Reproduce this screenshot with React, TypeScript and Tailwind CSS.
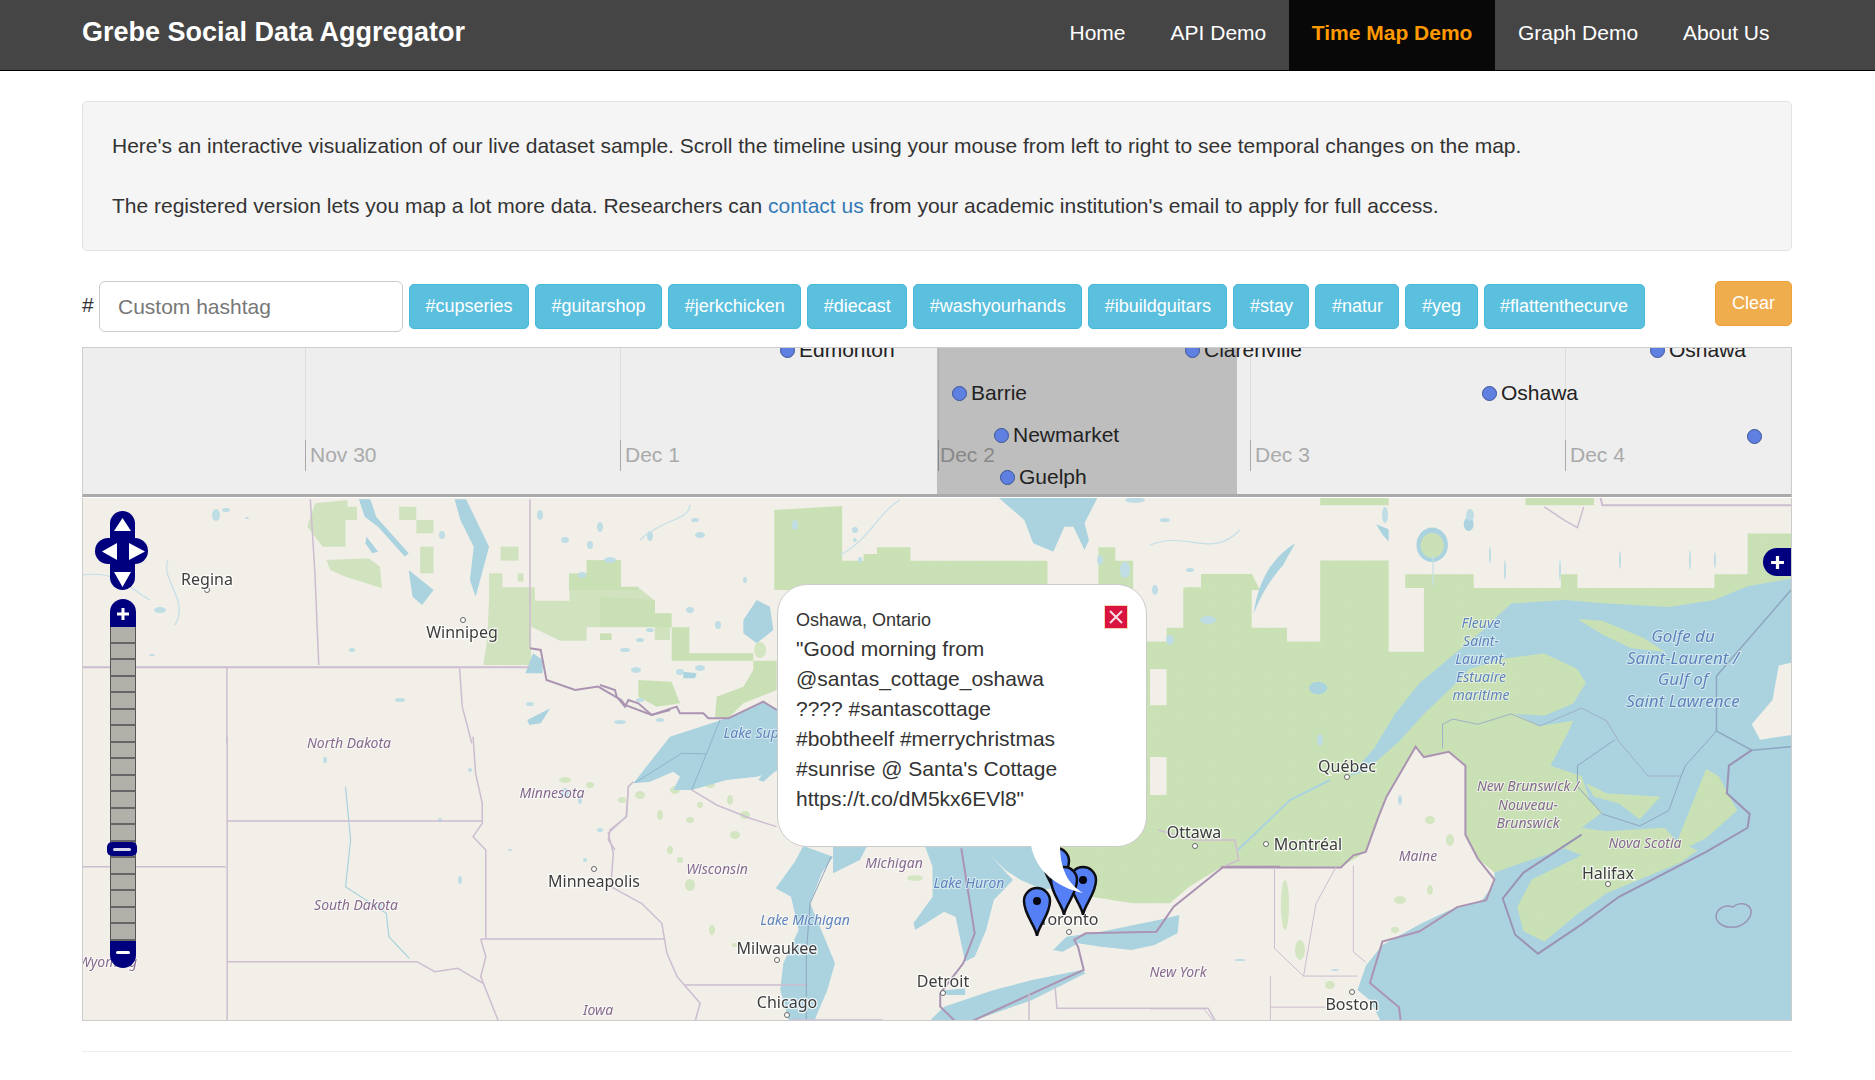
// Time map demo page: navbar, intro, hashtag buttons, timeline band and the map below it
const Z3 = 'translate(70 340) scale(.3827 .3333)'
const Z4 = 'translate(70 740) scale(.5102 .3333)'
const Z6 = 'translate(1150 500) scale(.415 .345)'
const Z9 = 'translate(560 490) scale(.4464 .3333)'
const Z10 = 'translate(680 830) scale(.3827 .3333)'
const Z12 = 'translate(600 590) scale(.3333 .3333)'

const navItems = [
  { label: 'Home' },
  { label: 'API Demo' },
  { label: 'Time Map Demo', active: true },
  { label: 'Graph Demo' },
  { label: 'About Us' },
]

const hashtags = [
  '#cupseries',
  '#guitarshop',
  '#jerkchicken',
  '#diecast',
  '#washyourhands',
  '#ibuildguitars',
  '#stay',
  '#natur',
  '#yeg',
  '#flattenthecurve',
]

const ticks = [
  { label: 'Nov 30', line: 'left-[222px]', text: 'left-[227px]' },
  { label: 'Dec 1', line: 'left-[537px]', text: 'left-[542px]' },
  { label: 'Dec 2', line: 'left-[855px]', text: 'left-[857px]' },
  { label: 'Dec 3', line: 'left-[1167px]', text: 'left-[1172px]' },
  { label: 'Dec 4', line: 'left-[1482px]', text: 'left-[1487px]' },
]

const events = [
  { label: 'Edmonton', pos: 'left-[697px] top-[-13px]' },
  { label: 'Clarenville', pos: 'left-[1102px] top-[-13px]' },
  { label: 'Oshawa', pos: 'left-[1567px] top-[-13px]' },
  { label: 'Barrie', pos: 'left-[869px] top-[30px]' },
  { label: 'Oshawa', pos: 'left-[1399px] top-[30px]' },
  { label: 'Newmarket', pos: 'left-[911px] top-[72px]' },
  { label: 'Guelph', pos: 'left-[917px] top-[114px]' },
  { label: '', pos: 'left-[1664px] top-[73px]' },
]

const cities: [string, number, number][] = [
  ['Regina', 207, 585],
  ['Winnipeg', 462, 638],
  ['Minneapolis', 594, 887],
  ['Milwaukee', 777, 954],
  ['Chicago', 787, 1008],
  ['Detroit', 943, 987],
  ['Toronto', 1069, 925],
  ['Ottawa', 1194, 838],
  ['Montréal', 1308, 850],
  ['Québec', 1347, 772],
  ['Halifax', 1608, 879],
  ['Boston', 1352, 1010],
]

const cityDots: [number, number][] = [
  [207, 590],
  [463, 620],
  [594, 869],
  [777, 960],
  [787, 1015],
  [943, 993],
  [1069, 932],
  [1195, 846],
  [1266, 844],
  [1347, 777],
  [1608, 884],
  [1352, 992],
]

const states: [string, number, number][] = [
  ['North Dakota', 349, 748],
  ['Minnesota', 552, 798],
  ['South Dakota', 356, 910],
  ['Wisconsin', 717, 874],
  ['Iowa', 598, 1015],
  ['Wyoming', 108, 967],
  ['Michigan', 894, 868],
  ['New York', 1178, 977],
  ['Maine', 1418, 861],
  ['New Brunswick /', 1528, 791],
  ['Nouveau-', 1528, 810],
  ['Brunswick', 1528, 828],
  ['Nova Scotia', 1645, 848],
]

const waters: [string, number, number, string][] = [
  ['Lake Superior', 766, 738, 'text-[14px]'],
  ['Lake Huron', 969, 888, 'text-[14px]'],
  ['Lake Michigan', 805, 925, 'text-[14px]'],
  ['Fleuve', 1481, 628, 'text-[14px]'],
  ['Saint-', 1481, 646, 'text-[14px]'],
  ['Laurent,', 1481, 664, 'text-[14px]'],
  ['Estuaire', 1481, 682, 'text-[14px]'],
  ['maritime', 1481, 700, 'text-[14px]'],
  ['Golfe du', 1683, 642, 'text-[17px]'],
  ['Saint-Laurent /', 1683, 664, 'text-[17px]'],
  ['Gulf of', 1683, 685, 'text-[17px]'],
  ['Saint Lawrence', 1683, 707, 'text-[17px]'],
]

// small lakes scattered over the shield, page coordinates
const ponds: [number, number, number, number][] = [
  [216, 515, 4, 6], [226, 510, 4, 2], [247, 518, 2, 1], [160, 610, 6, 3], [152, 655, 3, 1], [352, 650, 3, 2],
  [442, 535, 3, 4], [400, 700, 5, 2], [530, 704, 4, 2], [565, 540, 4, 3], [590, 545, 3, 4],
  [600, 527, 3, 5], [582, 575, 4, 3], [610, 560, 6, 3], [540, 515, 3, 5], [650, 536, 3, 5], [695, 520, 4, 2],
  [700, 535, 5, 3], [745, 580, 2, 3], [640, 640, 4, 2], [650, 630, 4, 2], [625, 650, 5, 2], [636, 670, 5, 3],
  [680, 672, 4, 3], [700, 668, 5, 3], [690, 610, 4, 3], [718, 625, 3, 4], [640, 700, 4, 2], [620, 722, 6, 2],
  [660, 720, 4, 2], [795, 525, 3, 5], [855, 530, 3, 3], [855, 540, 2, 2], [860, 560, 2, 3], [1125, 570, 5, 8],
  [1135, 500, 10, 3], [1100, 560, 3, 5], [1165, 520, 5, 2], [1190, 570, 4, 2], [1155, 590, 3, 5], [1385, 515, 3, 8],
  [1470, 515, 4, 6], [1490, 555, 1, 9], [1505, 570, 1, 10], [1560, 570, 1, 10], [1620, 560, 1, 9], [1690, 560, 1, 10],
  [1715, 560, 1, 8], [1208, 620, 8, 4], [1140, 610, 3, 5], [1170, 640, 4, 5], [1320, 740, 3, 6], [1400, 800, 2, 5],
  [460, 880, 2, 4], [380, 905, 2, 3], [600, 830, 3, 2], [585, 860, 2, 2], [1240, 960, 6, 1], [1335, 970, 4, 1],
  [565, 793, 4, 5], [580, 800, 2, 4], [325, 760, 2, 3], [440, 820, 2, 2], [470, 770, 2, 2], [510, 850, 2, 1],
]

// Wisconsin / Michigan / New England green speckle
const patches: [number, number, number, number][] = [
  [640, 795, 5, 4], [660, 815, 3, 5], [675, 790, 5, 4], [690, 820, 4, 3], [710, 785, 5, 3], [700, 805, 3, 3],
  [730, 800, 3, 5], [745, 815, 5, 4], [735, 835, 5, 4], [670, 850, 3, 4], [690, 885, 5, 6], [680, 860, 3, 3],
  [750, 765, 4, 4], [622, 800, 4, 3], [565, 780, 6, 3], [590, 785, 4, 3], [915, 878, 8, 3], [1010, 862, 5, 8],
  [1430, 820, 5, 4], [1450, 840, 4, 6], [1400, 900, 6, 4], [1430, 890, 3, 5], [1285, 905, 4, 25], [1300, 950, 5, 10],
  [1330, 985, 5, 4], [1395, 930, 4, 3], [760, 650, 6, 8], [712, 930, 3, 5], [735, 945, 3, 2],
]

const Border = ({ d, w = 1.5, c = 'stroke-[#cdbdd0]' }: { d: string; w?: number; c?: string }) => (
  <path d={d} fill="none" strokeWidth={w} vectorEffect="non-scaling-stroke" className={c} />
)

const Pin = ({ x, y }: { x: number; y: number }) => (
  <g transform={`translate(${x} ${y})`}>
    <path
      d="M0 35C-1 25-13 14-13 0A13 13 0 1 1 13 0C13 14 1 25 0 35Z"
      fill="#5580f5"
      stroke="#0d0d14"
      strokeWidth="2.5"
    />
    <circle r="4" fill="#050510" />
  </g>
)

const MapDrawing = () => (
  <svg viewBox="83 498 1708 522" className="block h-[522px] w-[1708px]">
    <defs>
      <pattern id="forest" width="5" height="5" patternUnits="userSpaceOnUse">
        <rect width="5" height="5" fill="#c7dfb2" />
        <path d="M0 0H5M0 0V5" stroke="#d5e7c4" strokeWidth="1" />
      </pattern>
      <filter id="soft">
        <feGaussianBlur stdDeviation="0.45" />
      </filter>
    </defs>
    <g filter="url(#soft)">
      <rect x="83" y="498" width="1708" height="522" fill="#f2efe9" />

      {/* forest blocks */}
      <g fill="url(#forest)">
        <g transform={Z3} opacity="0.8">
          <path d="M640 490L725 480V500H750V540H720V620H660L620 560Z" />
          <path d="M670 660L780 655L810 680L815 745L720 710L680 690Z" />
          <path d="M860 500H905V540H950V580H905V540H860Z" />
          <path d="M915 620H950V700H915Z" />
          <path d="M1125 620H1172V662H1125Z" />
          <path d="M1170 700H1185V725H1170Z" />
          <path d="M1095 700H1130V742H1215V782H1305V700H1350V660H1440V742H1485L1528 782V822H1568V900H1528V862H1350V902H1280L1205 860V975H1080L1090 900L1095 780Z" />
        </g>
        <g transform={Z9}>
          <path d="M480 60L632 48V212H680V192H710V172H785V212H1092V300H480Z" />
          <path d="M20 252H60V212H135V290H175V300H20Z" />
          <path d="M1206 172H1244V212H1284V300H1206Z" />
          <path d="M1436 252H1550L1568 300H1400V292H1436Z" />
        </g>
        <g transform={Z12}>
          <path d="M0 20L165 30V70H215V112H268V190H460V212H530V300L430 340L385 385L345 380L350 320L430 290L460 240V212H215V112H165V110H0Z" />
          <path d="M115 270L215 275L240 340L170 350L115 320Z" />
          <path d="M0 130H35V150H0Z" />
        </g>
        <g transform={Z6}>
          <path d="M-300 410H40V370H80V255H125V215H245V370H330V410H410V175H575V440H660V255H615V215H780V255H990V215H1030V255H1360V215H1440V97H1545V700L1100 900L1040 1050L830 1080L790 1040L760 970V770L720 730L660 745L640 715L570 860L550 920L520 1020L460 1063L170 1065L94 1122L48 1169H-43L-137 1151L-219 1122L-300 1050Z" />
          <path d="M410 -10H575V15H410Z" />
          <path d="M905 -10H1070V15H905Z" />
        </g>
      </g>
      <g transform={Z6} fill="#f2efe9">
        <path d="M0 490H40V595H0Z" />
        <path d="M0 745H40V855H0Z" />
      </g>
      {patches.map(([cx, cy, rx, ry]) => (
        <ellipse key={`${cx}-${cy}`} cx={cx} cy={cy} rx={rx} ry={ry} fill="#d3e5c1" />
      ))}

      {/* water */}
      <g fill="#aad3df">
        <g transform={Z6}>
          <path d="M1560 225L1440 250L1360 290L1250 310L1100 300L1000 290L870 300L800 380L730 450L650 530L590 620L540 720L480 800L520 785L600 700L660 620L730 540L770 490L850 460L950 445L1030 490L1050 530L1020 590L950 625L880 620L940 655L1020 640L1005 680L965 770L1040 800L1060 870L1090 905L1040 950L1000 1010L900 1050L830 1080L830 1110L800 1160L720 1190L650 1230L560 1290L520 1350L500 1420L530 1450L560 1520H1560Z" />
          <ellipse cx="680" cy="130" rx="38" ry="50" />
          <path d="M250 330C260 230 300 160 350 125L320 190C290 230 265 280 250 330Z" />
          <path d="M545 70L575 85L575 120L560 100Z" />
          <ellipse cx="768" cy="70" rx="12" ry="20" />
          <ellipse cx="405" cy="545" rx="22" ry="18" />
        </g>
        <g transform={Z9}>
          <path d="M980 20H1205L1175 100L1185 150L1175 180L1150 110L1130 110L1105 185L1060 160L1040 90Z" />
        </g>
        <g transform={Z3}>
          <path d="M1005 478H1035L1095 620L1060 770L1045 720L1055 620L1020 540Z" />
          <path d="M885 690L950 750L920 795L895 770Z" />
          <path d="M755 478H785L800 530L885 640L875 650L805 560L770 530Z" />
          <path d="M775 590L805 635L790 640L772 610Z" />
          <path d="M1190 1000L1210 940L1235 960L1235 1000Z" />
          <path d="M1195 1140L1255 1105L1230 1150L1200 1155Z" />
        </g>
        <g transform={Z12}>
          <path d="M100 580L210 440L380 385L490 335L540 360V540L470 560L380 570L275 600L220 600L240 560L220 545L150 575Z" />
          <path d="M430 90L470 30L510 50L520 120L470 160L430 130Z" />
          <path d="M475 570L530 490V540L490 575Z" />
          <path d="M250 245L290 250L285 265L250 265Z" />
        </g>
        <g transform={Z10}>
          <path d="M322 48L400 80L370 130L340 220L380 330L405 400L385 480L350 575H285L262 480L270 400L310 300L290 200L250 175L300 95Z" />
          <path d="M400 45H490L470 90L400 130Z" />
          <path d="M640 48H920L990 170L950 180L890 150L850 120L810 75L870 150L820 210L800 300L770 380L745 395L720 260L690 245L615 300L610 280L660 200L660 110Z" />
          <path d="M650 575L690 530L820 480L920 450L1050 420L1060 430L920 510L760 575Z" />
          <path d="M975 360L1010 320L1100 305L1250 270L1305 255L1300 310L1240 345L1180 360L1100 350L1040 340L1000 365Z" />
          <path d="M680 482L745 475L745 495L700 495Z" />
        </g>
      </g>
      {ponds.map(([cx, cy, rx, ry]) => (
        <ellipse key={`${cx}-${cy}`} cx={cx} cy={cy} rx={rx} ry={ry} fill="#bfdde5" />
      ))}

      {/* land back over the water */}
      <g transform={Z6}>
        <ellipse cx="680" cy="132" rx="28" ry="36" fill="url(#forest)" />
        <path d="M1030 345L1090 350L1190 400L1240 440L1160 430L1090 390Z" fill="url(#forest)" />
        <path
          d="M1000 1010L1040 950L1100 960L1240 950L1270 990L1320 1015L1280 1050L1180 1100L1100 1140L1030 1200L950 1280L900 1250L885 1180L920 1100L1040 1030Z"
          fill="url(#forest)"
        />
        <path d="M1270 990L1340 780L1370 800L1415 900L1340 980L1290 1010Z" fill="url(#forest)" />
        <path d="M1050 820L1100 850L1230 860L1180 925L1130 880L1070 860Z" fill="url(#forest)" />
        <path d="M1550 470L1515 480L1500 580L1450 650L1470 695L1550 680Z" fill="#f2efe9" />
      </g>

      {/* rivers */}
      <g fill="none" stroke="#c3dfe7" strokeWidth="1.2">
        <path d="M168 560C160 580 190 600 175 625" />
        <path d="M83 575C120 570 130 590 150 600" />
        <path d="M640 540C660 520 690 520 690 505" />
        <path d="M840 555C870 540 880 510 900 500" />
        <path d="M1150 545C1190 530 1210 560 1240 530" />
        <path d="M1433 555V585" />
        <path d="M1330 780L1290 800L1238 850" strokeWidth="2" stroke="#aad3df" />
        <g transform={Z4}>
          <path d="M540 140L550 300L540 440L620 520L625 590L665 655" stroke="#a8d2de" vectorEffect="non-scaling-stroke" />
        </g>
      </g>

      {/* borders */}
      <g transform={Z3}>
        <Border d="M33 982H1200" w={2} />
        <Border d="M628 478L640 700L650 975" />
        <Border d="M1202 478V925" />
        <Border d="M410 985V1210" />
        <Border d="M1018 985L1025 1100L1050 1210" />
        <Border d="M1202 925L1230 930L1245 1020L1320 1050L1380 1040L1440 1080L1450 1095L1520 1125L1568 1110" w={2} c="stroke-[#ab94b2]" />
      </g>
      <g transform={Z12}>
        <Border d="M0 285L45 300L50 320L75 350L85 330L115 340L155 375L230 350L240 370L310 370L325 385L385 385L490 335L530 360" w={2} c="stroke-[#ab94b2]" />
        <Border d="M100 575L85 590L80 680L30 720L25 750L45 780" />
        <Border d="M360 390L320 490L275 600" c="stroke-[#8fb3c9]" w={1} />
        <Border d="M105 578L245 490L320 492" c="stroke-[#8fb3c9]" w={1} />
        <Border d="M275 600L350 645L450 685L530 710" />
      </g>
      <g transform={Z4}>
        <Border d="M308 -10V845" />
        <Border d="M308 243H808" />
        <Border d="M25 380H305" />
        <Border d="M308 665H680L715 695L760 685L810 730" />
        <Border d="M790 -10L795 100L808 190V250L790 290L815 330V595" />
        <Border d="M805 597H1165" />
        <Border d="M805 597L815 650L805 710L840 845" />
        <Border d="M1095 135L1090 230L1055 280L1065 340L1060 440L1120 490L1160 550L1170 640L1190 710L1235 790L1225 845" />
        <Border d="M1205 735H1445" />
      </g>
      <g transform={Z10}>
        <Border d="M395 80L340 220L330 370V575" c="stroke-[#8fa6c0]" w={1} />
        <Border d="M735 55L770 310L740 400L680 490L680 530L720 575" w={2} c="stroke-[#ab94b2]" />
        <Border d="M760 575L1055 420L1040 350L1030 330L1060 310L1245 305L1290 230L1420 110H1568" w={2} c="stroke-[#ab94b2]" />
        <Border d="M980 470L985 535H1380L1400 575" />
        <Border d="M912 490V575" />
        <Border d="M530 570H290" />
        <Border d="M1250 0L1340 30L1450 30L1460 90L1420 110" />
      </g>
      <g transform={Z6}>
        <Border d="M170 1065H460L490 1030L520 1020L550 920L570 860L640 715L660 745L720 730L760 770V970L790 1040L830 1100L810 1160L740 1180L650 1250L560 1280L530 1400L600 1470L605 1520" w={2} c="stroke-[#ab94b2]" />
        <Border d="M705 720V650L730 635L790 650L870 620L940 655L1040 603L1100 640L1130 700L1200 800H1280" c="stroke-[#9fb0c6]" w={1} />
        <Border d="M1545 260L1365 510V670L1450 725L1545 715" c="stroke-[#8fa6c0]" />
        <Border d="M1365 670L1290 770L1280 800L1250 900L1180 945L1090 910L1030 830V770L1120 695" c="stroke-[#8fa6c0]" w={1} />
        <Border d="M1450 725L1395 770L1390 850L1445 910L1440 950L1340 1020L1130 1150L1040 1230L935 1315L880 1260L850 1155L900 1080L1040 970" w={2} c="stroke-[#9b93b5]" />
        <Border d="M950 20L1000 60L1030 80L1045 20" />
        <Border d="M1085 -10L1090 15H1545" w={2} />
        <Border d="M1405 1180C1380 1170 1360 1190 1365 1215C1375 1245 1425 1250 1445 1210C1460 1170 1420 1160 1405 1180Z" w={1.5} c="stroke-[#9b93b5]" />
        <Border d="M490 1060V1310L520 1340" w={1} />
        <Border d="M300 1065V1300L370 1380H500" w={1} />
        <Border d="M450 1060L400 1170L370 1380" w={1} />
        <Border d="M290 1470L430 1470M290 1380V1520" w={1} />
        <Border d="M0 1475H130L160 1520" w={1} />
      </g>

      {/* labels */}
      {cityDots.map(([cx, cy]) => (
        <circle key={`${cx}-${cy}`} cx={cx} cy={cy} r="2.5" fill="#fff" stroke="#666" strokeWidth="1" />
      ))}
      {states.map(([label, x, y]) => (
        <text
          key={label}
          x={x}
          y={y}
          textAnchor="middle"
          className="fill-[#866a8e] stroke-white/60 stroke-[2px] font-['Noto_Sans',sans-serif] text-[14px] italic [paint-order:stroke]"
        >
          {label}
        </text>
      ))}
      {waters.map(([label, x, y, size]) => (
        <text
          key={label}
          x={x}
          y={y}
          textAnchor="middle"
          className={`fill-[#5f84bd] stroke-white/50 stroke-[2px] font-['Noto_Sans',sans-serif] italic [paint-order:stroke] ${size}`}
        >
          {label}
        </text>
      ))}
      {cities.map(([label, x, y]) => (
        <text
          key={label}
          x={x}
          y={y}
          textAnchor="middle"
          className="fill-[#3d3d3d] stroke-white/80 stroke-[2.5px] font-['Noto_Sans',sans-serif] text-[16px] [paint-order:stroke]"
        >
          {label}
        </text>
      ))}
    </g>

    <Pin x={1056} y={861} />
    <Pin x={1083} y={880} />
    <Pin x={1064} y={880} />
    <Pin x={1037} y={901} />
  </svg>
)

const PanControl = () => (
  <svg viewBox="0 0 53 79" className="absolute left-[12px] top-[13px] h-[79px] w-[53px]">
    <rect x="15" width="25" height="79" rx="12.5" fill="#00007f" />
    <rect y="27" width="53" height="26" rx="13" fill="#00007f" />
    <path d="M27.5 7L36 20H19Z M7 40.5L22 32V49Z M50 40.5L34 32V49Z M27.5 76L19 61H36Z" fill="#fff" />
  </svg>
)

const ZoomBar = () => (
  <div className="absolute left-[27px] top-[101px] flex w-[26px] flex-col">
    <div className="flex h-[28px] items-center justify-center rounded-t-[13px] bg-[#00007f] pt-[2px]">
      <svg viewBox="0 0 14 14" className="h-[14px] w-[14px]">
        <path d="M7 1V13M1 7H13" stroke="#fff" strokeWidth="3" />
      </svg>
    </div>
    {Array.from({ length: 19 }).map((_, i) => (
      <div key={i} className="h-[16.5px] border-x border-b-2 border-x-[#555] border-b-[#666] bg-[#b1b0a9]" />
    ))}
    <div className="flex h-[27px] items-center justify-center rounded-b-[13px] bg-[#00007f] pb-[4px]">
      <div className="h-[3px] w-[14px] rounded-sm bg-white" />
    </div>
    <div className="absolute left-[-3px] top-[243px] flex h-[14px] w-[30px] items-center justify-center rounded-[5px] bg-[#00007f]">
      <div className="h-[3px] w-[18px] rounded-sm bg-[#d8d8ec]" />
    </div>
  </div>
)

const Popup = () => (
  <div className="absolute left-[694px] top-[86px] h-[263px] w-[370px] rounded-[30px] border border-[#ccc] bg-white pl-[18px] pt-[21px] font-['Liberation_Sans',sans-serif] text-[#333]">
    <div className="text-[18px] leading-[28px]">Oshawa, Ontario</div>
    <div className="w-[285px] text-[21px] leading-[30px]">
      "Good morning from @santas_cottage_oshawa ???? #santascottage #bobtheelf #merrychristmas #sunrise @ Santa's Cottage https://t.co/dM5kx6EVl8"
    </div>
    <div className="absolute left-[326px] top-[20px] flex h-[24px] w-[24px] items-center justify-center border border-[#f4d9b0] bg-[#d9143f]">
      <svg viewBox="0 0 16 16" className="h-[16px] w-[16px]">
        <path d="M2 2L14 14M14 2L2 14" stroke="#f7dfe4" strokeWidth="2" />
      </svg>
    </div>
    <svg viewBox="0 0 55 50" className="absolute left-[252px] top-[260px] h-[50px] w-[55px]">
      <path d="M1 0C5 24 25 42 53 48C38 39 30 24 30 0Z" fill="#fff" />
    </svg>
  </div>
)

export default function App() {
  return (
    <div className="min-h-[1080px] bg-white font-['Liberation_Sans',sans-serif] text-[#333]">
      <nav className="flex h-[71px] items-stretch justify-between border-b border-black bg-[#454545] pl-[82px] pr-[83px]">
        <a className="flex items-center pb-[5px] text-[27px] font-bold text-white">Grebe Social Data Aggregator</a>
        <ul className="flex items-stretch">
          {navItems.map((item) => (
            <li
              key={item.label}
              className={
                item.active
                  ? 'flex items-center bg-[#080808] px-[23px] pb-[5px] text-[21px] font-bold text-[#ff9900]'
                  : 'flex items-center px-[22.5px] pb-[5px] text-[21px] text-white'
              }
            >
              {item.label}
            </li>
          ))}
        </ul>
      </nav>

      <div className="ml-[82px] mr-[83px]">
        <div className="mt-[30px] h-[150px] rounded-[5px] border border-[#e3e3e3] bg-[#f5f5f5] px-[29px] py-[29px] text-[21px] leading-[30px]">
          <p>
            Here's an interactive visualization of our live dataset sample. Scroll the timeline using your mouse from
            left to right to see temporal changes on the map.
          </p>
          <p className="mt-[30px]">
            The registered version lets you map a lot more data. Researchers can{' '}
            <a className="text-[#337ab7]">contact us</a> from your academic institution's email to apply for full
            access.
          </p>
        </div>

        <div className="mt-[30px] flex items-start">
          <span className="mt-[9px] w-[17px] text-[21px] leading-[30px]">#</span>
          <input
            placeholder="Custom hashtag"
            className="h-[51px] w-[304px] rounded-[6px] border border-[#ccc] bg-white px-[18px] text-[21px] text-[#555] placeholder:text-[#777]"
          />
          <div className="ml-[6px] mt-[3px] flex gap-[6px]">
            {hashtags.map((tag) => (
              <button
                key={tag}
                className="h-[45px] rounded-[5px] border border-[#46b8da] bg-[#5bc0de] px-[15.5px] text-[18px] text-white"
              >
                {tag}
              </button>
            ))}
          </div>
          <button className="ml-auto h-[45px] rounded-[5px] border border-[#eea236] bg-[#f0ad4e] px-[16px] text-[18px] text-white">
            Clear
          </button>
        </div>

        <div className="relative mt-[15px] h-[150px] overflow-hidden border-x border-t border-[#ccc] border-b-[3px] border-b-[#aaa] bg-[#eee]">
          {ticks.map((tick) => (
            <div key={tick.label}>
              <div className={`absolute top-0 h-[92px] w-px bg-[#ddd] ${tick.line}`} />
              <div className={`absolute top-[92px] h-[31px] w-px bg-[#aaa] ${tick.line}`} />
              <span className={`absolute top-[92px] text-[21px] leading-[30px] text-[#aaa] ${tick.text}`}>
                {tick.label}
              </span>
            </div>
          ))}
          <div className="absolute left-[854px] top-0 h-full w-[300px] bg-black/20" />
          {events.map((event) => (
            <div
              key={event.pos}
              className={`absolute flex h-[30px] items-center gap-[4px] text-[21px] text-[#222] ${event.pos}`}
            >
              <span className="h-[15px] w-[15px] rounded-full border border-[#3a5596] bg-[#5f80e0]" />
              {event.label}
            </div>
          ))}
        </div>

        <div className="relative mt-[1px] h-[523px] overflow-hidden border-x border-b border-[#ccc]">
          <MapDrawing />
          <PanControl />
          <ZoomBar />
          <div className="absolute right-0 top-[50px] flex h-[28px] w-[28px] items-center justify-center rounded-l-full bg-[#00007f]">
            <svg viewBox="0 0 14 14" className="h-[15px] w-[15px]">
              <path d="M7 1V13M1 7H13" stroke="#fff" strokeWidth="3" />
            </svg>
          </div>
          <Popup />
        </div>

        <hr className="mt-[30px] border-t border-[#eee]" />
      </div>
    </div>
  )
}
